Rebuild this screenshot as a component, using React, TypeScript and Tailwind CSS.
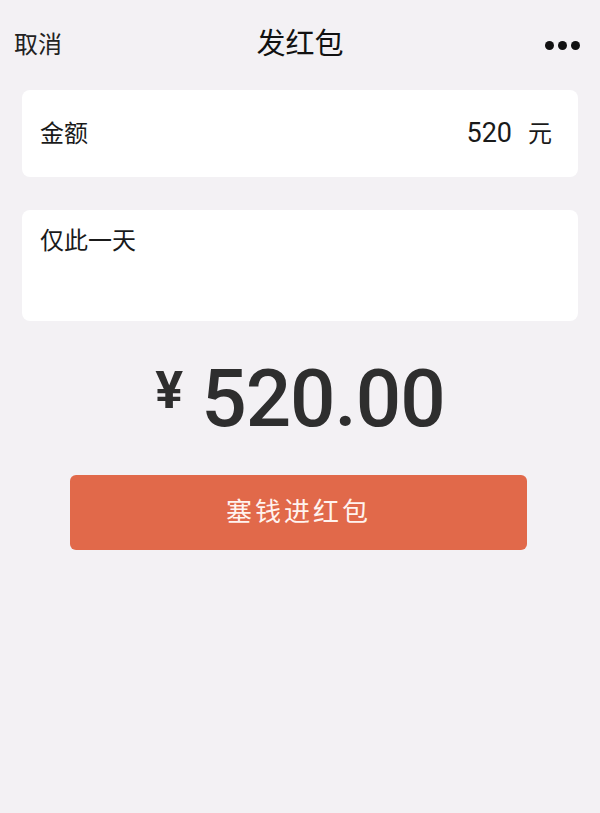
import React from "react";

const cjk = "font-['Roboto','Noto_Sans_CJK_SC',sans-serif]";

export default function App() {
  return (
    <div className={`min-h-[813px] w-full bg-[#f3f1f4] text-[#1a1a1a] ${cjk}`}>
      {/* header */}
      <div className="grid h-[90px] grid-cols-3 items-center px-[14px]">
        <span className="text-[24px] text-[#222]">取消</span>
        <span className="text-center text-[29px] text-[#111]">发红包</span>
        <div className="flex justify-end gap-[4px] pr-[6px]">
          <span className="h-[9px] w-[9px] rounded-full bg-[#111]" />
          <span className="h-[9px] w-[9px] rounded-full bg-[#111]" />
          <span className="h-[9px] w-[9px] rounded-full bg-[#111]" />
        </div>
      </div>

      <div className="mx-[22px] flex h-[87px] items-center justify-between rounded-lg bg-white pl-[18px] pr-[26px]">
        <span className="text-[24px]">金额</span>
        <span className="flex items-center gap-[16px] text-[24px]">
          <span className="text-[27px]">520</span>
          <span>元</span>
        </span>
      </div>

      <div className="mx-[22px] mt-[33px] h-[111px] rounded-lg bg-white px-[18px] pt-[13px]">
        <span className="text-[24px]">仅此一天</span>
      </div>

      <div className="mt-[38px] flex items-start justify-center text-[#2e2e2e]">
        <span className="mt-[6px] mr-[18px] text-[52px] leading-none font-bold">¥</span>
        <span className="text-[80px] leading-none font-medium tracking-[-1px]">520.00</span>
      </div>

      <div className="ml-[70px] mr-[73px] mt-[36px] flex h-[75px] items-center justify-center rounded-md bg-[#e1694a] text-[26px] tracking-[3px] text-[#fff3ef]">
        塞钱进红包
      </div>
    </div>
  );
}
